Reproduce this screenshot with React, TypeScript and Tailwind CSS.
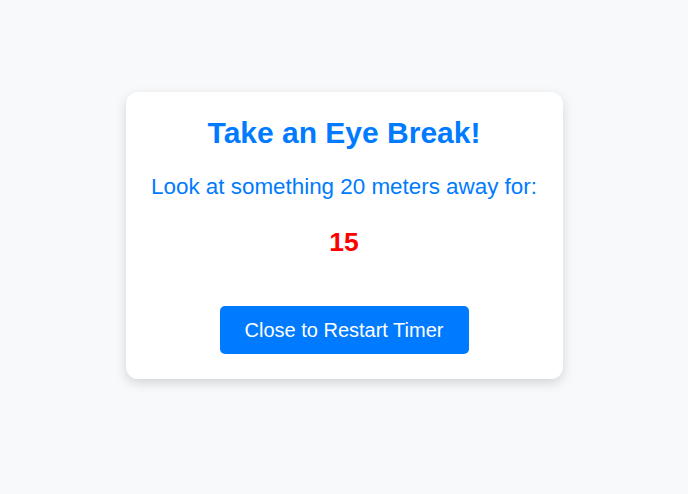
const App = () => {
  const seconds = 15;

  return (
    <div
      className="min-h-[494px] w-full bg-[#f8f9fa] flex justify-center pt-[92px]"
      style={{ fontFamily: '"Liberation Sans", Arial, sans-serif' }}
    >
      <div className="w-[437px] h-[287px] bg-white rounded-[12px] shadow-[0_4px_12px_rgba(0,0,0,0.15)] flex flex-col items-center pt-[24px] pb-[25px] text-center">
        <h2 className="text-[30px] leading-[34px] font-bold text-[#007bff]">Take an Eye Break!</h2>
        <p className="mt-[24px] text-[22.4px] leading-[26px] text-[#007bff]">
          Look at something 20 meters away for:
        </p>
        <div className="mt-[27px] text-[26.5px] leading-[30px] font-bold text-[#ff0000]">{seconds}</div>
        <button className="mt-[49px] h-[48px] w-[249px] rounded-[5px] bg-[#007bff] text-white text-[20px]">
          Close to Restart Timer
        </button>
      </div>
    </div>
  );
};

export default App;
